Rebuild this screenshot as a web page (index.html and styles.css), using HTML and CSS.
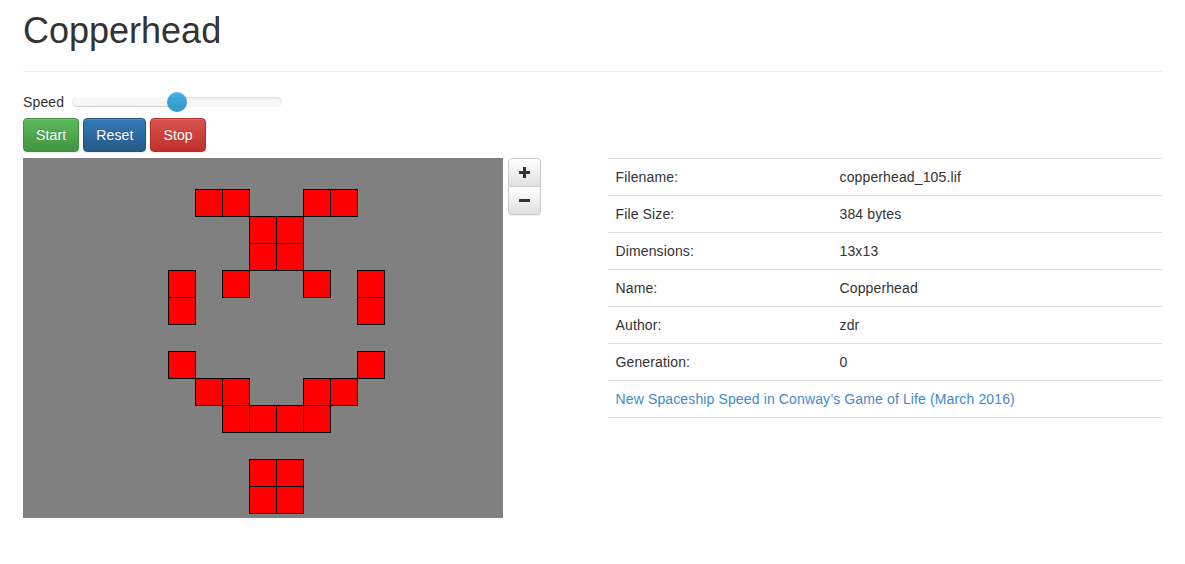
FILE: index.html
```html
<!DOCTYPE html>
<html>
<head>
<meta charset="utf-8">
<title>Copperhead</title>
<link rel="stylesheet" href="styles.css">
</head>
<body>
<div class="container">
  <h1 class="title">Copperhead</h1>
  <hr class="rule">
  <div class="speed-row">
    <label class="speed-label">Speed</label>
    <div class="slider">
      <div class="slider-track">
        <div class="slider-selection" style="width: 50%"></div>
      </div>
      <div class="slider-handle" style="left: 50%"></div>
    </div>
  </div>
  <div class="controls">
    <button class="btn btn-success">Start</button>
    <button class="btn btn-primary">Reset</button>
    <button class="btn btn-danger">Stop</button>
  </div>
  <div class="main-row">
    <div class="col">
      <div class="board-wrap">
        <svg class="board" width="480" height="360" viewBox="0 0 480 360">
          <rect x="0" y="0" width="480" height="360" fill="#808080"/>
          <g transform="translate(145.5 31.5)" fill="#ff0000" stroke="#000" stroke-width="1">
            <rect x="27" y="0" width="27" height="27"/>
            <rect x="54" y="0" width="27" height="27"/>
            <rect x="135" y="0" width="27" height="27"/>
            <rect x="162" y="0" width="27" height="27"/>
            <rect x="81" y="27" width="27" height="27"/>
            <rect x="108" y="27" width="27" height="27"/>
            <rect x="81" y="54" width="27" height="27"/>
            <rect x="108" y="54" width="27" height="27"/>
            <rect x="0" y="81" width="27" height="27"/>
            <rect x="54" y="81" width="27" height="27"/>
            <rect x="135" y="81" width="27" height="27"/>
            <rect x="189" y="81" width="27" height="27"/>
            <rect x="0" y="108" width="27" height="27"/>
            <rect x="189" y="108" width="27" height="27"/>
            <rect x="0" y="162" width="27" height="27"/>
            <rect x="189" y="162" width="27" height="27"/>
            <rect x="27" y="189" width="27" height="27"/>
            <rect x="54" y="189" width="27" height="27"/>
            <rect x="135" y="189" width="27" height="27"/>
            <rect x="162" y="189" width="27" height="27"/>
            <rect x="54" y="216" width="27" height="27"/>
            <rect x="81" y="216" width="27" height="27"/>
            <rect x="108" y="216" width="27" height="27"/>
            <rect x="135" y="216" width="27" height="27"/>
            <rect x="81" y="270" width="27" height="27"/>
            <rect x="108" y="270" width="27" height="27"/>
            <rect x="81" y="297" width="27" height="27"/>
            <rect x="108" y="297" width="27" height="27"/>
          </g>
        </svg>
        <div class="zoom-group">
          <button class="zoom-btn zoom-top" aria-label="Zoom in">
            <svg width="11" height="11" viewBox="0 0 11 11"><path d="M4 0h3v4h4v3H7v4H4V7H0V4h4z" fill="#333"/></svg>
          </button>
          <button class="zoom-btn zoom-bottom" aria-label="Zoom out">
            <svg width="11" height="3" viewBox="0 0 11 3"><path d="M0 0h11v3H0z" fill="#333"/></svg>
          </button>
        </div>
      </div>
    </div>
    <div class="col">
      <table class="info">
        <tbody>
          <tr><td class="key">Filename:</td><td>copperhead_105.lif</td></tr>
          <tr><td class="key">File Size:</td><td>384 bytes</td></tr>
          <tr><td class="key">Dimensions:</td><td>13x13</td></tr>
          <tr><td class="key">Name:</td><td>Copperhead</td></tr>
          <tr><td class="key">Author:</td><td>zdr</td></tr>
          <tr><td class="key">Generation:</td><td>0</td></tr>
          <tr><td colspan="2"><a class="link" href="#">New Spaceship Speed in Conway’s Game of Life (March 2016)</a></td></tr>
        </tbody>
      </table>
    </div>
  </div>
</div>
</body>
</html>
```
FILE: styles.css
```css
* {
  box-sizing: border-box;
}

html, body {
  margin: 0;
  padding: 0;
  background: #fff;
}

body {
  font-family: "Liberation Sans", Arial, sans-serif;
  font-size: 14px;
  line-height: 1.42857143;
  letter-spacing: 0.13px;
  color: #333;
}

.container {
  padding: 0 23px;
}

.title {
  margin: 11px 0 10px;
  font-size: 36px;
  font-weight: 500;
  line-height: 1.1;
  letter-spacing: 0;
  color: #333;
}

.rule {
  margin: 20px 0;
  border: 0;
  border-top: 1px solid #eee;
  height: 0;
}

.speed-row {
  display: flex;
  align-items: center;
  height: 20px;
  margin-bottom: 6px;
}

.speed-label {
  margin-right: 8px;
}

.slider {
  position: relative;
  width: 210px;
  height: 20px;
}

.slider-track {
  position: absolute;
  left: 0;
  right: 0;
  top: 5.5px;
  height: 10px;
  border-radius: 5px;
  background-image: linear-gradient(to bottom, #f5f5f5 0, #f9f9f9 100%);
  box-shadow: inset 0 1px 2px rgba(0, 0, 0, 0.1);
  overflow: hidden;
}

.slider-selection {
  height: 100%;
  border-radius: 5px 0 0 5px;
  background-image: linear-gradient(to bottom, #f9f9f9 0, #f5f5f5 100%);
  box-shadow: inset 0 -1px 0 rgba(0, 0, 0, 0.15);
}

.slider-handle {
  position: absolute;
  top: 0;
  width: 20px;
  height: 20px;
  margin-left: -10px;
  border-radius: 50%;
  background-color: #337ab7;
  background-image: linear-gradient(to bottom, #149bdf 0, #0480be 100%);
  box-shadow: inset 0 1px 0 rgba(255, 255, 255, 0.2), 0 1px 2px rgba(0, 0, 0, 0.05);
  opacity: 0.8;
}

.controls {
  display: flex;
  gap: 4px;
  margin-bottom: 6px;
}

.btn {
  display: inline-block;
  margin: 0;
  padding: 6px 12px;
  font-family: inherit;
  font-size: 14px;
  line-height: 1.42857143;
  letter-spacing: 0.13px;
  color: #fff;
  border: 1px solid transparent;
  border-radius: 4px;
  text-shadow: 0 -1px 0 rgba(0, 0, 0, 0.2);
  box-shadow: inset 0 1px 0 rgba(255, 255, 255, 0.15), 0 1px 1px rgba(0, 0, 0, 0.075);
  cursor: pointer;
}

.btn-success {
  background-image: linear-gradient(to bottom, #5cb85c 0, #419641 100%);
  border-color: #3e8f3e;
}

.btn-primary {
  background-image: linear-gradient(to bottom, #337ab7 0, #265a88 100%);
  border-color: #245580;
}

.btn-danger {
  background-image: linear-gradient(to bottom, #d9534f 0, #c12e2a 100%);
  border-color: #b92c28;
}

.main-row {
  display: flex;
  gap: 30px;
}

.col {
  flex: 1 1 0;
  min-width: 0;
}

.board-wrap {
  display: flex;
  align-items: flex-start;
  gap: 5px;
}

.board {
  display: block;
  flex: none;
}

.zoom-group {
  display: flex;
  flex-direction: column;
  width: 33px;
}

.zoom-btn {
  display: flex;
  align-items: center;
  justify-content: center;
  width: 33px;
  height: 29px;
  margin: 0;
  padding: 0;
  border: 1px solid #ccc;
  background-image: linear-gradient(to bottom, #fff 0, #e0e0e0 100%);
  box-shadow: inset 0 1px 0 rgba(255, 255, 255, 0.15), 0 1px 1px rgba(0, 0, 0, 0.075);
  cursor: pointer;
}

.zoom-top {
  border-radius: 4px 4px 0 0;
}

.zoom-bottom {
  margin-top: -1px;
  border-radius: 0 0 4px 4px;
}

.info {
  width: 100%;
  border-collapse: collapse;
  border-spacing: 0;
  border-bottom: 1px solid #ddd;
}

.info td {
  padding: 8px;
  line-height: 1.42857143;
  vertical-align: top;
  border-top: 1px solid #ddd;
  text-align: left;
}

.info td.key {
  width: 224px;
}

.link {
  color: #428bca;
  text-decoration: none;
}
```
